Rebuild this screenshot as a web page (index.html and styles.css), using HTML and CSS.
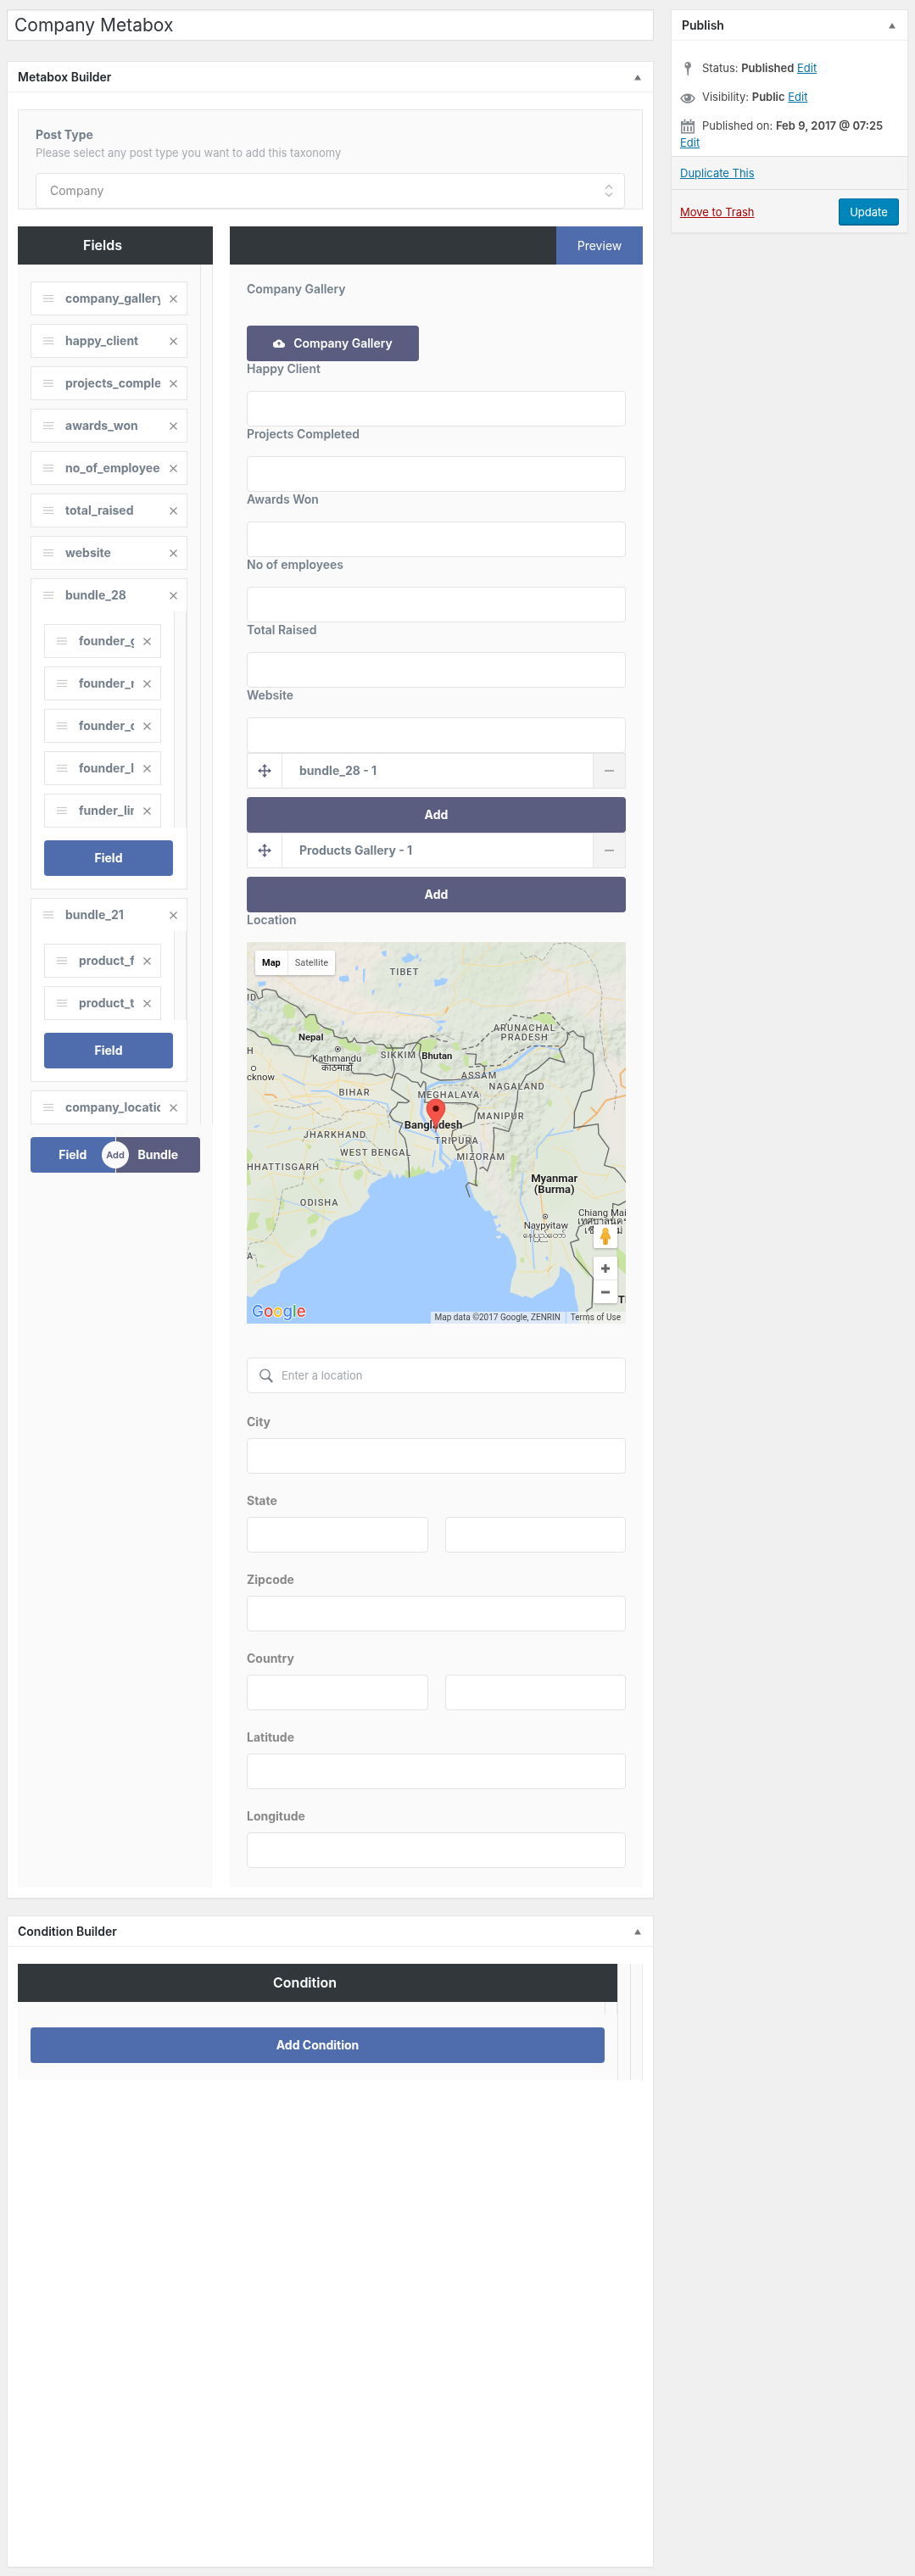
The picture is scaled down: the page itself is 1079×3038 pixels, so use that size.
FILE: index.html
```html
<!DOCTYPE html>
<html lang="en">
<head>
<meta charset="utf-8">
<meta name="viewport" content="width=device-width, initial-scale=1">
<title>Company Metabox</title>
<link rel="stylesheet" href="styles.css">
</head>
<body>
<svg class="sprite" aria-hidden="true">
  <symbol id="i-grip" viewBox="0 0 12 8"><path d="M0 .5h12M0 7.5h12" stroke="#c6c6c6"/><path d="M0 4h12" stroke="#dcdcdc" stroke-width="2"/></symbol>
  <symbol id="i-close" viewBox="0 0 9 9"><path d="M.5.5l8 8M8.5.5l-8 8" stroke="currentColor" stroke-width="1.2"/></symbol>
  <symbol id="i-up" viewBox="0 0 8 7"><path d="M4 0l4 6.500H0z" fill="currentColor"/></symbol>
  <symbol id="i-move" viewBox="0 0 16 16"><path d="M8 2v12M2 8h12" stroke="currentColor" stroke-width="1.500"/><path d="M8 0l3 3.500H5zM8 16l3-3.500H5zM0 8l3.500-3v6zM16 8l-3.500-3v6z" fill="currentColor"/></symbol>
</svg>
<form class="page">
  <main class="main">
    <input class="title" type="text" aria-label="Title" value="Company Metabox">

    <section class="box">
      <header class="box-head"><h2>Metabox Builder</h2><button type="button" class="toggle" aria-label="Toggle Metabox Builder"><svg width="8" height="7"><use href="#i-up"/></svg></button></header>
      <div class="box-body">
        <div class="post-type">
          <label for="post-type">Post Type</label>
          <p>Please select any post type you want to add this taxonomy</p>
          <div class="select">
            <select id="post-type"><option>Company</option></select>
            <svg width="10" height="16" viewBox="0 0 10 16" fill="none" stroke="#bbb" stroke-width="1.500"><path d="M1 5.500l4-4 4 4M1 10.500l4 4 4-4"/></svg>
          </div>
        </div>

        <div class="builder">
          <section class="column">
            <h3 class="bar">Fields</h3>
            <div class="gutter">
              <ul class="fields">
                <li class="item"><div class="row"><svg class="grip" width="12" height="8"><use href="#i-grip"/></svg><span>company_gallery</span><button type="button" aria-label="Remove"><svg width="9" height="9"><use href="#i-close"/></svg></button></div></li>
                <li class="item"><div class="row"><svg class="grip" width="12" height="8"><use href="#i-grip"/></svg><span>happy_client</span><button type="button" aria-label="Remove"><svg width="9" height="9"><use href="#i-close"/></svg></button></div></li>
                <li class="item"><div class="row"><svg class="grip" width="12" height="8"><use href="#i-grip"/></svg><span>projects_completed</span><button type="button" aria-label="Remove"><svg width="9" height="9"><use href="#i-close"/></svg></button></div></li>
                <li class="item"><div class="row"><svg class="grip" width="12" height="8"><use href="#i-grip"/></svg><span>awards_won</span><button type="button" aria-label="Remove"><svg width="9" height="9"><use href="#i-close"/></svg></button></div></li>
                <li class="item"><div class="row"><svg class="grip" width="12" height="8"><use href="#i-grip"/></svg><span>no_of_employees</span><button type="button" aria-label="Remove"><svg width="9" height="9"><use href="#i-close"/></svg></button></div></li>
                <li class="item"><div class="row"><svg class="grip" width="12" height="8"><use href="#i-grip"/></svg><span>total_raised</span><button type="button" aria-label="Remove"><svg width="9" height="9"><use href="#i-close"/></svg></button></div></li>
                <li class="item"><div class="row"><svg class="grip" width="12" height="8"><use href="#i-grip"/></svg><span>website</span><button type="button" aria-label="Remove"><svg width="9" height="9"><use href="#i-close"/></svg></button></div></li>
                <li class="item">
                  <div class="row"><svg class="grip" width="12" height="8"><use href="#i-grip"/></svg><span>bundle_28</span><button type="button" aria-label="Remove"><svg width="9" height="9"><use href="#i-close"/></svg></button></div>
                  <div class="gutter">
                    <ul class="fields nested">
                      <li class="item"><div class="row"><svg class="grip" width="12" height="8"><use href="#i-grip"/></svg><span>founder_gallery</span><button type="button" aria-label="Remove"><svg width="9" height="9"><use href="#i-close"/></svg></button></div></li>
                      <li class="item"><div class="row"><svg class="grip" width="12" height="8"><use href="#i-grip"/></svg><span>founder_name</span><button type="button" aria-label="Remove"><svg width="9" height="9"><use href="#i-close"/></svg></button></div></li>
                      <li class="item"><div class="row"><svg class="grip" width="12" height="8"><use href="#i-grip"/></svg><span>founder_designation</span><button type="button" aria-label="Remove"><svg width="9" height="9"><use href="#i-close"/></svg></button></div></li>
                      <li class="item"><div class="row"><svg class="grip" width="12" height="8"><use href="#i-grip"/></svg><span>founder_link</span><button type="button" aria-label="Remove"><svg width="9" height="9"><use href="#i-close"/></svg></button></div></li>
                      <li class="item"><div class="row"><svg class="grip" width="12" height="8"><use href="#i-grip"/></svg><span>funder_linkedin</span><button type="button" aria-label="Remove"><svg width="9" height="9"><use href="#i-close"/></svg></button></div></li>
                    </ul>
                  </div>
                  <div class="item-foot"><button type="button" class="btn blue">Field</button></div>
                </li>
                <li class="item">
                  <div class="row"><svg class="grip" width="12" height="8"><use href="#i-grip"/></svg><span>bundle_21</span><button type="button" aria-label="Remove"><svg width="9" height="9"><use href="#i-close"/></svg></button></div>
                  <div class="gutter">
                    <ul class="fields nested">
                      <li class="item"><div class="row"><svg class="grip" width="12" height="8"><use href="#i-grip"/></svg><span>product_feature</span><button type="button" aria-label="Remove"><svg width="9" height="9"><use href="#i-close"/></svg></button></div></li>
                      <li class="item"><div class="row"><svg class="grip" width="12" height="8"><use href="#i-grip"/></svg><span>product_title</span><button type="button" aria-label="Remove"><svg width="9" height="9"><use href="#i-close"/></svg></button></div></li>
                    </ul>
                  </div>
                  <div class="item-foot"><button type="button" class="btn blue">Field</button></div>
                </li>
                <li class="item"><div class="row"><svg class="grip" width="12" height="8"><use href="#i-grip"/></svg><span>company_location</span><button type="button" aria-label="Remove"><svg width="9" height="9"><use href="#i-close"/></svg></button></div></li>
              </ul>
            </div>
            <div class="add-pair">
              <button type="button" class="btn blue">Field</button>
              <button type="button" class="btn violet">Bundle</button>
              <span class="add-badge">Add</span>
            </div>
          </section>

          <section class="column">
            <div class="bar bar-preview"><button type="button">Preview</button></div>
            <div class="preview">
              <div class="field gallery">
                <span class="label">Company Gallery</span>
                <button type="button" class="btn violet upload"><svg width="14" height="10" viewBox="0 0 14 10"><path d="M11.300 3.900A4.500 4.500 0 0 0 3 2.800 3.600 3.600 0 0 0 3.600 10h7.300a3 3 0 0 0 .4-6.100z" fill="#fff"/><path d="M7 2.800l2.400 2.600H7.700v2H6.300v-2H4.600z" fill="#5a5d80"/></svg>Company Gallery</button>
              </div>
              <div class="field"><label for="f1">Happy Client</label><input id="f1" type="text"></div>
              <div class="field"><label for="f2">Projects Completed</label><input id="f2" type="text"></div>
              <div class="field"><label for="f3">Awards Won</label><input id="f3" type="text"></div>
              <div class="field"><label for="f4">No of employees</label><input id="f4" type="text"></div>
              <div class="field"><label for="f5">Total Raised</label><input id="f5" type="text"></div>
              <div class="field"><label for="f6">Website</label><input id="f6" type="text"></div>
              <div class="bundle"><span class="move"><svg width="16" height="16"><use href="#i-move"/></svg></span><strong>bundle_28 - 1</strong><button type="button" aria-label="Collapse"><i></i></button></div>
              <button type="button" class="btn violet wide">Add</button>
              <div class="bundle"><span class="move"><svg width="16" height="16"><use href="#i-move"/></svg></span><strong>Products Gallery - 1</strong><button type="button" aria-label="Collapse"><i></i></button></div>
              <button type="button" class="btn violet wide">Add</button>
              <div class="field">
                <span class="label">Location</span>
                <div class="map">
                  <svg class="map-art" viewBox="33 33 1341 1350" preserveAspectRatio="xMidYMid slice" role="img" aria-label="Map of Bangladesh">
                    <defs>
                      <filter id="relief" x="0" y="0" width="100%" height="100%">
                        <feTurbulence type="fractalNoise" baseFrequency=".03" numOctaves="4" seed="7"/>
                        <feDiffuseLighting lighting-color="#fff" surfaceScale="14" diffuseConstant="1.100" result="l"><feDistantLight azimuth="225" elevation="52"/></feDiffuseLighting>
                        <feComposite in="l" in2="SourceGraphic" operator="in"/>
                      </filter>
                      <filter id="soft" x="-20%" y="-20%" width="140%" height="140%"><feGaussianBlur stdDeviation="14"/></filter>
                    </defs>
                    <path fill="#e3e9dc" d="M33 33h1341v1350H33z"/>
                    <g filter="url(#soft)">
                      <path fill="#efebe3" d="M33 33H480L560 75 470 110 490 170 400 200 520 260 700 280 680 360 560 370 420 350 300 280 180 220 33 190z"/>
                      <path fill="#ebe9e2" d="M1080 80l180 90 114-30v170l-120 20-60-80-110 50-90-110zM1280 400l94 60v370l-60-40-30-130z"/>
                      <path fill="#e9eadb" d="M33 370l200 90 180 50 130 20v110l-150 30-360-60zM620 620l200 10-10 150-180 20z"/>
                      <path fill="#dfe8d7" d="M780 60l230-20 80 70-140 130-160-20zM1050 700l130 20 20 250-110 20zM90 900l230-50 20 120-220 200-80-90z"/>
                      <path fill="#ece8e2" d="M860 640l50 40-20 100 60 160 50 220-50-150-110-200z"/>
                    </g>
                    <g opacity=".2" style="mix-blend-mode:multiply">
                      <path filter="url(#relief)" d="M33 200l140 20 110 70 140 70 170 0 200-10 100 20 150-90 130 10 100 60 110-40 150-110v560l-100-50-20-200-100-60-110 100-80 0-60 200-30 180-60 0-40-150 20-160-160 10-90-150-320 30-120-60-210-90-70-40z"/>
                    </g>
                    <g opacity=".08" style="mix-blend-mode:multiply"><path filter="url(#relief)" d="M33 33h1341v400H33zM850 700h180l-20 400-130-140z"/></g>
                    <g fill="#c9e3a2">
                      <path d="M165 255l25-5 15 22-4 28-22 6-17-22zM236 300l28-14 22 22 6 38-28 12-30-22zM190 335l20-5-4 20-18 2zM300 340l30-6 12 20-28 8zM358 372l30 0 24 20 30 12-10 18-40-6-34-24zM458 402l38-2-4 26-22 8-15-14zM520 400l52 4-6 14-42 4zM640 380l48-6 22 10-28 42-54-10zM760 390l22-2 4 30-20-4zM798 432l20 4v38l-14-4zM716 460l46 20-24 12-22-14zM1035 305l40-22 34 8 22 34-40 2-22-14zM1112 438l34-14 2 18-14 6zM860 460l22-10 4 14-18 8zM80 345l50 22 34 24-34 2-48-36z"/>
                      <path d="M33 760l24 30-20 30 12 70-16 5zM240 745l24 10-10 15zM350 795l18 10-10 30-14-15zM390 770l30 5-18 18zM412 845l26-10 8 18-16 24-18-10zM290 865l20 10-20 14zM150 935l18 10-4 36-12-5zM44 990l36 0-14 32 10 20-44 16zM98 1012l30-6 8 42-30 8-4-20zM248 1010l24-18 20 12-16 22-28 6zM258 1052l22-6v22l-20 10zM72 1172l30 8-20 8z"/>
                      <path d="M585 868l12-30 12 12 10-26 12 18 12-20 6 18 14-8 4 22-40 8-12 8zM968 785l24 6-14 60-8 30zM832 872l22 6v16l-16-4zM1100 595l14 0-4 24-10-6zM1003 1150l12 0-2 18-14-4z"/>
                      <path d="M1195 1110l20 30 30 60-2 20-40-50zM1340 1110l34 30v70l-30-30z"/>
                    </g>
                    <g fill="#a3ccff">
                      <path d="M580 90l18-8 6-12 12 8 16 10-14 12-22 8-12-10zM696 165l20 2 6-8 24 6-12 18-36 8zM360 155l32-4 4 20-20 4-16-6zM444 130l8-5-2 50-6 0zM418 120l10-4-2 16-8 2zM72 175l28-4 0 14-24 6zM305 95l18-2 6 10-16 4zM508 68l20-6-2 22-8 0zM630 80l12-5-2 16-8 2zM596 128l10-6 6 14-10 8zM570 180l10-4-2 14-8 2zM476 205l12-6-6 18-6 4zM370 310l6 2v16l-6-2zM700 315l26-6 14 6-20 6zM705 345l16-16 6 8-14 16zM640 95l12-5-4 14zM60 685l20-6-6 8-14 4zM180 690l10-8-2 16-8 4z"/>
                      <path d="M33 1285L50 1291 62 1280 76 1262 112 1246 134 1240 150 1214 152 1200 166 1186 200 1166 228 1150 250 1122 276 1108 302 1084 322 1040 344 1020 368 1008 402 998 430 984 444 962 468 936 460 912 474 888 500 872 528 862 540 838 548 858 556 872 564 850 574 870 584 856 596 866 612 866 638 858 664 850 674 842 686 852 706 850 722 836 728 846 740 816 752 832 762 806 772 796 782 812 796 806 806 834 816 880 838 938 856 962 878 986 892 982 904 1002 918 1000 928 1024 934 1044 922 1040 914 1052 940 1062 958 1078 972 1108 986 1146 986 1186 970 1228 964 1272 990 1280 1010 1290 1018 1284 1042 1294 1054 1284 1082 1268 1116 1250 1138 1214 1142 1180 1158 1190 1178 1210 1192 1250 1194 1284 1204 1320 1210 1383H33z"/>
                      <path d="M1088 1150l10-6 2 20z"/>
                    </g>
                    <g fill="#e3e9dc"><path d="M915 1074a9 7 0 1 0 16-3zM905 1014l22-6 6 16-16 18zM928 1040l20-6 4 24-20 8zM742 826l8-14 4 20-12 4z"/></g>
                    <g fill="none" stroke="#f6dc9a" stroke-width="3" stroke-linejoin="round">
                      <path d="M33 65l40 50 60 30 100 70 120 50 70 22 90-8 110 16 110-6 40-60-10-50 60-60 70-60-10-26M560 295l140-8 110-52 60 25 110 0 50-20 60 0 140-50 60 30M800 40l-6 70 120 10 150-30 40 40 60 10 10 90M1170 120l70-15 40-40M1230 300l60-70 80 10M1290 270l20 120-10 60"/>
                      <path d="M33 400l60 40 50 60 60 30 90 10 70-20 110 20 90-30M33 510l120 10 40 60 90-10 80-50 120 40M50 540l60 60 120-20 100 0 60 50 150 20M33 650l80-20 90 30 130-40M120 440l-30 150 60 60-30 60M250 440l-20 100 30 60 10 80M360 500l-10 90 40 70M450 510l-20 80 60 60 50 60M33 700l90 10 100-20 120 20 100-40M100 760l110-30 60 10 40-50 90 20 130-40M80 870l40-20 130 20 60-30 150-20 80 30M60 800l60 60 20 90-30 100 60 90 40 10M250 740l-20 110 80 90-10 100M340 700l40 100-20 80 40 90M430 720l30 110-10 70M500 650l-20 90 30 90M560 690l0 120M540 640l40 50M130 1000l100-20 120 10M33 940l90 10M33 1080l100 20 60 50M60 1240l80-50 60-30"/>
                      <path d="M600 540l20 70-10 80M690 610l80 40-50 60M720 610l10 70 60 60 20 90M620 750l70 20M780 510l100-20 80-30 110-50 80-10M830 540l60 40 70-10M840 620l60 0 50-40M870 640l0 80 50 60"/>
                      <path d="M1020 840l40 40 20 80 10 60 20 80-10 120M1060 890l-20-80 30-60 60-40 60-80-30-50M1120 760l60 20 40 70 90 10M1090 1040l60 60 40 100M1030 860l-40 90 30 110 0 80 40 60M990 1200l90 0 50-30M1200 900l60 40 110-30M1220 1160l60 60M1300 880l30-60 44 10M1150 560l-60-40-80 30M1210 870l70 80"/>
                    </g>
                    <g fill="none" stroke="#f2b775" stroke-width="6" stroke-linejoin="round"><path d="M1374 575l-70 18-36 50-66 56M1250 618l24 24M1374 480l-20 20 4 40 16 10M735 285l10-22M96 572l30 2 14 12"/><path stroke-width="3" d="M1070 900l8 80 12 80M1096 1200l16-20"/></g>
                    <g fill="none" stroke="#a3ccff" stroke-linejoin="round">
                      <path stroke-width="10" d="M1060 397l-44 32-54 48-56 14M770 530l-60 0-34 16-20 34-6 60 20 40 34 30 16 40-2 50 30 30"/>
                      <path stroke-width="5" d="M906 491l-60 16-76 23M1060 397l90 20M260 560l60 0 50 26 110 8 50 12 14 50 50 40 110 36M716 740l10 40 40 36M240 540l-80-40M700 770l-10 60M1120 690l-60 70 0 40M1010 850l-10 100 40 100 10 140M1090 720l100-20"/>
                      <path stroke-width="3" d="M33 240l60 40M300 600l-60 10-60-20M470 740l-60-10-50 30M500 860l-60-40-120-20M330 1020l-90-50-100-30M860 740l10 80M560 280l120 20 40 30"/>
                    </g>
                    <g fill="none" stroke="#a5a5a0" stroke-width="3" stroke-dasharray="14 6" stroke-linejoin="round">
                      <path d="M130 610l70 10 50-10 50 40 60 10 20-25 70-10 40-25 40 30 8 60M230 740l20-40 60-20 60-20M300 800l-60 30-10 60-70 20-15 90-20 60-30 30-50 10-20 60M300 800l20 30 60 10 60-30 30 40 40 10M440 700l20 30 80 70M670 560l60-20 90 0 40 30 0 40-100-4M880 610l50-50 60-10M860 680l50-8 50 22M830 720l-30-4-30 10M33 1140l30 0 10 50M1000 70l20 20 30-10 30 20 40-60 50-5 60 30 40 60 20 90-8 110 20 140 40 80-10 90M680 370l50-10 40 20M1070 370l80-20"/>
                    </g>
                    <g fill="none" stroke="#666" stroke-width="4" stroke-linejoin="round">
                      <path d="M33 198l30 12 12 24 14-6-2-24 14-5 34 7 10 20 24 14 22 12 22 10 18 22 12 16 10-10 22 0 8 28 24 18 32 10 4 20 28 8 14-4 8 18 14-4 6-12 10 16 34 2 18-8 12 12 30 2 12 12 60 0 6-12 40-8 14 8-6 36 10 32-4 30 30 14 38 14 56-2 98-8 4-36-16-12-18 2 4-36-36-2"/>
                      <path d="M33 340l26 10 18 18 30 6 16 22 56 6 24 32 54 6 8-8 24 26 36 8 60 2 26 30 60 2 20 6 28-6 28 14 10-32-8-36 0-36-8-14M640 384l-20 30-4 12M640 384l18-14"/>
                      <path d="M560 500l10-2 30 14 16 14 22 4 10 16 10-20 8 6 0 40-4 28 78 2 72 0 26 6 14 12-10 18-4 32-26 10-50 20-6 30 20 40 20-10 20-14 10-20 0 20 6 40 14 50-4 50 6 10-30-12-10 12 14 40M560 500l-6 20-10 34 30 20 34 22-10 6-30-2-6 14-16 14-8 16 14 20 32 10-12 30 20 24 8 36 6 50 2 52"/>
                      <path d="M856 835l12-6 16 14 20-60 4-60-2-34 54 14 20-64 10-50 2-30 30-54 40-24 42-38 54 16-20-48 20-16 10-20 0-18 20-10 16 18 22 4 0 40 32 20 4 70-10 56-34 10-26 70 0 40-2 16 20-4 66-10 2 36 36 50-16 60 36 10 18 18 24 34"/>
                      <path d="M1374 950l-26 14-20-6 0 60-60-4-60 26-10 30 10 16-30 10 14 50 66 76-4 104-18 10 6 50"/>
                    </g>
                    <path fill="none" stroke="#666" stroke-width="4" stroke-dasharray="16 9" d="M658 372l28-8 34 18 30 4M795 412l50-10 50-50 50-20 30-40 60 10 40-18 30 0 40 50 40 36M818 475l110-6 50-40 60-28 100 0"/>
                    <g class="region" text-anchor="middle">
                      <text x="591" y="149">TIBET</text><text x="1016" y="347">ARUNACHAL</text><text x="1016" y="381">PRADESH</text><text x="570" y="444">SIKKIM</text><text x="855" y="516">ASSAM</text><text x="989" y="555">NAGALAND</text><text x="748" y="585">MEGHALAYA</text><text x="414" y="576">BIHAR</text><text x="932" y="660">MANIPUR</text><text x="345" y="726">JHARKHAND</text><text x="776" y="747">TRIPURA</text><text x="490" y="789">WEST BENGAL</text><text x="862" y="804">MIZORAM</text><text x="290" y="966">ODISHA</text>
                    </g>
                    <g class="region"><text x="33" y="839">HHATTISGARH</text><text x="33" y="240">ID</text><text x="33" y="429">H</text><text x="33" y="1154">A</text></g>
                    <g class="country" text-anchor="middle"><text x="260" y="381">Nepal</text><text x="706" y="447">Bhutan</text><text class="big" x="693" y="693">Bangladesh</text><text class="big" x="1121" y="881">Myanmar</text><text class="big" x="1121" y="921">(Burma)</text></g>
                    <text class="country big" x="1346" y="1311">TI</text>
                    <g class="city"><text x="264" y="456">Kathmandu</text><text x="297" y="489">काठमाडौँ</text><text x="33" y="522">cknow</text><text x="1013" y="1046">Naypyitaw</text><text x="1010" y="1080">နေပြည်တော်</text><text x="1206" y="1001">Chiang Mai</text><text x="1204" y="1032">เทศบาลนคร</text><text x="1228" y="1066">เชียงใหม่</text></g>
                    <g fill="#fff" stroke="#444" stroke-width="3"><circle cx="355" cy="412" r="9"/><circle cx="57" cy="480" r="8"/><circle cx="1089" cy="1004" r="8"/></g>
                    <g fill="#222"><circle cx="355" cy="412" r="4"/><circle cx="1089" cy="1004" r="3"/></g>
                    <path fill="#f5534a" stroke="#b8392e" stroke-width="2" d="M702 706c-3-46-33-58-33-85a33 33 0 0 1 66 0c0 27-30 39-33 85z"/><circle cx="702" cy="622" r="11" fill="#5d120c"/>
                    <text class="logo" x="51" y="1359"><tspan fill="#4285f4">G</tspan><tspan fill="#ea4335">o</tspan><tspan fill="#fbbc05">o</tspan><tspan fill="#4285f4">g</tspan><tspan fill="#34a853">l</tspan><tspan fill="#ea4335">e</tspan></text>
                  </svg>
                  <div class="map-type"><button type="button" class="on">Map</button><button type="button">Satellite</button></div>
                  <div class="map-tools">
                    <button type="button" class="pegman" aria-label="Street View"><svg width="14" height="20" viewBox="0 0 14 20"><path d="M3.500 6.500h7l2.500 6-1.600.8-1.400-2.300-.8 8.500H4.800L4 11l-1.400 2.300L1 12.500z" fill="#f7b52c" stroke="#d98e1b" stroke-width=".6"/><circle cx="7" cy="3.600" r="3.300" fill="#fbc13a" stroke="#d98e1b" stroke-width=".5"/><path d="M7 12.500v7" stroke="#c27c12"/></svg></button>
                    <div class="zoom"><button type="button" aria-label="Zoom in"><svg width="12" height="12"><path d="M1 6h10M6 1v10" stroke="#666" stroke-width="3"/></svg></button><button type="button" aria-label="Zoom out"><svg width="12" height="12"><path d="M1 6h10" stroke="#666" stroke-width="3"/></svg></button></div>
                  </div>
                  <div class="map-legal"><span>Map data ©2017 Google, ZENRIN</span><a href="#terms">Terms of Use</a></div>
                </div>
              </div>
              <div class="search">
                <svg width="16" height="17" viewBox="0 0 16 17" fill="none" stroke="#6f7a85"><circle cx="6.500" cy="6.800" r="5.700" stroke-width="1.400"/><path d="M10.500 11l4.700 5" stroke-width="2.200"/></svg>
                <input type="text" aria-label="Location" placeholder="Enter a location">
              </div>
              <div class="address">
                <div><label for="a1">City</label><input id="a1" type="text"></div>
                <div><label for="a2">State</label><div class="pair"><input id="a2" type="text"><input type="text" aria-label="State code"></div></div>
                <div><label for="a3">Zipcode</label><input id="a3" type="text"></div>
                <div><label for="a4">Country</label><div class="pair"><input id="a4" type="text"><input type="text" aria-label="Country code"></div></div>
                <div><label for="a5">Latitude</label><input id="a5" type="text"></div>
                <div><label for="a6">Longitude</label><input id="a6" type="text"></div>
              </div>
            </div>
          </section>
        </div>
      </div>
    </section>

    <section class="box grow">
      <header class="box-head"><h2>Condition Builder</h2><button type="button" class="toggle" aria-label="Toggle Condition Builder"><svg width="8" height="7"><use href="#i-up"/></svg></button></header>
      <div class="box-body">
        <div class="gutter condition-outer"><div class="gutter"><div class="condition">
          <h3 class="bar">Condition</h3>
          <div class="gutter slot"><div></div></div>
          <button type="button" class="btn blue">Add Condition</button>
        </div></div></div>
      </div>
    </section>
  </main>

  <aside class="box side">
    <header class="box-head"><h2>Publish</h2><button type="button" class="toggle" aria-label="Toggle Publish"><svg width="8" height="7"><use href="#i-up"/></svg></button></header>
    <div class="status">
      <p><svg width="18" height="18" viewBox="0 0 18 18"><path d="M9 1a4 4 0 0 1 1.400 7.700L9.900 17H8.700L7.900 8.700A4 4 0 0 1 9 1z" fill="#82878c"/><circle cx="8" cy="4" r="1.200" fill="#fff"/></svg>Status: <b>Published</b> <a href="#status">Edit</a></p>
      <p><svg width="18" height="18" viewBox="0 0 18 18"><path d="M1 10c4-6.500 12-6.500 16 0-4 6.500-12 6.500-16 0z" fill="none" stroke="#82878c" stroke-width="1.500"/><circle cx="9" cy="9.500" r="4" fill="#82878c"/><circle cx="7.700" cy="8.300" r="1.300" fill="#fff"/></svg>Visibility: <b>Public</b> <a href="#visibility">Edit</a></p>
      <p><svg width="18" height="18" viewBox="0 0 18 18"><path d="M1 3h16v14.500H1z" fill="#82878c"/><path d="M2.500 7.500h13V16h-13z" fill="#fff"/><path d="M5 9v6M9 9v6M13 9v6" stroke="#82878c" stroke-width="1.800"/><path d="M5.500 0v5M12.500 0v5" stroke="#fff" stroke-width="3.500"/><path d="M5.500.5v4M12.500.5v4" stroke="#82878c" stroke-width="1.700"/></svg>Published on: <b>Feb 9, 2017 @ 07:25</b> <a href="#date">Edit</a></p>
    </div>
    <div class="duplicate"><a href="#duplicate">Duplicate This</a></div>
    <div class="actions"><a class="trash" href="#trash">Move to Trash</a><button type="submit">Update</button></div>
  </aside>
</form>
</body>
</html>
```
FILE: styles.css
```css
*, *::before, *::after { box-sizing: border-box; }
body {
  margin: 0;
  background: #f0f0f0;
  color: #444;
  font: 13px/20px Inter, "Open Sans", sans-serif;
}
h2, h3, p, ul { margin: 0; padding: 0; list-style: none; }
button, input, select { font: inherit; color: inherit; margin: 0; }
button { padding: 0; border: 0; background: none; cursor: pointer; }
svg { display: block; flex: none; }
a { color: #0073aa; }
.sprite { position: absolute; width: 0; height: 0; }

.page {
  display: grid;
  grid-template-columns: minmax(0, 1fr) 280px;
  gap: 20px;
  align-items: start;
  min-height: 100vh;
  padding: 11px 8px 10px;
}
.main { display: flex; flex-direction: column; align-self: stretch; gap: 20px; }
.title {
  width: 100%;
  height: 37px;
  margin-bottom: 4px;
  padding: 0 8px;
  border: 1px solid #ddd;
  background: #fff;
  box-shadow: inset 0 1px 2px rgba(0, 0, 0, .07);
  color: #32373c;
  font-size: 21px;
}

.box { border: 1px solid #e5e5e5; background: #fff; box-shadow: 0 1px 1px rgba(0, 0, 0, .04); }
.grow { flex: 1; }
.box-head {
  display: flex;
  align-items: center;
  justify-content: space-between;
  height: 36px;
  padding: 0 14px 0 12px;
  border-bottom: 1px solid #eee;
}
.box-head h2 { color: #23282d; font-size: 14px; font-weight: 600; }
.toggle { color: #72777c; padding-top: 2px; }
.box-body { display: flex; flex-direction: column; gap: 20px; padding: 20px 12px 12px; }

.post-type { padding: 18px 20px 0; border: 1px solid #e5e5e5; background: #fafafa; }
.post-type label { display: block; color: #737f8b; font-size: 14px; font-weight: 700; line-height: 22px; }
.post-type p { margin-bottom: 14px; color: #a5aab0; }
.select { position: relative; }
.select select {
  width: 100%;
  height: 42px;
  padding: 0 16px;
  border: 1px solid #e3e3e3;
  border-radius: 4px;
  background: #fff;
  appearance: none;
  color: #8b8b8b;
  font-size: 14px;
}
.select svg { position: absolute; top: 13px; right: 14px; pointer-events: none; }

.builder { display: grid; grid-template-columns: 230px minmax(0, 1fr); gap: 20px; }
.column { background: #fafafa; }
.bar {
  height: 45px;
  padding-right: 30px;
  background: #32373b;
  color: #fff;
  font-size: 16px;
  font-weight: 600;
  line-height: 45px;
  text-align: center;
}
.bar-preview { display: flex; justify-content: flex-end; padding: 0; }
.bar-preview button { width: 102px; background: #4f6dad; color: #fff; font-size: 14px; font-weight: 400; }

.gutter { padding-right: 13px; border-right: 1px solid #e8e8e8; background: #fafafa; }
.fields {
  display: flex;
  flex-direction: column;
  gap: 10px;
  padding: 20px 15px 0;
  border-right: 1px solid #e5e5e5;
}
.nested { padding-top: 15px; background: #fff; }
.item { border: 1px solid #e5e5e5; background: #fff; }
.row { display: flex; align-items: center; height: 38px; padding: 0 11px 0 14px; }
.row span {
  flex: 1;
  min-width: 0;
  margin: 0 11px 0 14px;
  overflow: hidden;
  white-space: nowrap;
  color: #737f8b;
  font-size: 14px;
  font-weight: 700;
}
.row button { color: #888; }
.item-foot { padding: 15px 16px 15px 15px; }

.btn {
  width: 100%;
  height: 42px;
  border-radius: 4px;
  color: #fff;
  font-size: 14px;
  font-weight: 700;
}
.blue { background: #4f6dad; }
.violet { background: #5a5d80; }
.add-pair { position: relative; display: flex; gap: 1px; margin: 15px; }
.add-pair .blue { border-radius: 4px 0 0 4px; }
.add-pair .violet { border-radius: 0 4px 4px 0; }
.add-badge {
  position: absolute;
  top: 5px;
  left: calc(50% - 16px);
  width: 32px;
  height: 32px;
  border-radius: 50%;
  background: #fafafa;
  color: #5a5d80;
  font-size: 11px;
  font-weight: 600;
  line-height: 32px;
  text-align: center;
}

.preview { padding: 20px 20px 23px; }
.field label, .label {
  display: block;
  margin-bottom: 17px;
  color: #737f8b;
  font-size: 14px;
  font-weight: 600;
  line-height: 18px;
}
.gallery .label { margin-bottom: 34px; }
.preview input {
  display: block;
  width: 100%;
  height: 42px;
  padding: 0 16px;
  border: 1px solid #e3e3e3;
  border-radius: 4px;
  background: #fff;
}
.upload { display: flex; align-items: center; justify-content: center; gap: 10px; width: 203px; font-weight: 600; }
.bundle { display: flex; height: 42px; margin-bottom: 10px; border: 1px solid #e3e3e3; background: #fff; color: #737f8b; font-size: 14px; }
.bundle .move { display: grid; place-items: center; width: 41px; border-right: 1px solid #e3e3e3; color: #5a5d80; }
.bundle strong { flex: 1; padding-left: 20px; font-weight: 700; line-height: 40px; }
.bundle button { display: grid; place-items: center; width: 38px; border-left: 1px solid #e3e3e3; background: #f3f3f3; }
.bundle i { width: 11px; height: 2px; background: #aaa; }
.wide { display: block; }

.map { position: relative; height: 450px; margin-bottom: 40px; overflow: hidden; font-family: Roboto, "Noto Sans", sans-serif; }
.map-art { width: 100%; height: 100%; }
.map-art text { paint-order: stroke; stroke: rgba(255, 255, 255, .6); stroke-width: 5px; stroke-linejoin: round; }
.region { fill: #555; font-size: 33px; font-weight: 500; letter-spacing: 3px; }
.country { fill: #222; font-size: 34px; font-weight: 700; }
.big { font-size: 39px; font-weight: 700; }
.city { fill: #2b2b2b; font-size: 34px; }
.map-art .logo { font-family: Inter, sans-serif; font-size: 56px; font-weight: 500; stroke: #fff; }
.map-type { position: absolute; top: 10px; left: 10px; display: flex; height: 29px; border-radius: 2px; background: #fff; box-shadow: 0 1px 3px rgba(0, 0, 0, .3); font-size: 11px; }
.map-type button { padding: 0 8px; color: #565656; }
.map-type .on { border-right: 1px solid #e6e6e6; color: #000; font-weight: 700; }
.map-tools { position: absolute; right: 10px; bottom: 24px; display: grid; gap: 10px; }
.pegman, .zoom { width: 28px; border-radius: 2px; background: #fff; box-shadow: 0 1px 3px rgba(0, 0, 0, .3); }
.pegman { display: grid; place-items: center; height: 28px; }
.zoom button { display: grid; place-items: center; width: 100%; height: 27px; }
.zoom button + button { border-top: 1px solid #e6e6e6; height: 28px; }
.map-legal { position: absolute; right: 0; bottom: 0; display: flex; gap: 1px; height: 14px; color: #444; font-size: 10px; line-height: 14px; }
.map-legal > * { padding: 0 6px 0 5px; background: rgba(245, 245, 245, .7); color: #444; text-decoration: none; white-space: nowrap; }

.search { position: relative; margin-bottom: 23px; }
.search svg { position: absolute; top: 13px; left: 15px; }
.preview .search input { padding-left: 40px; }
.search input::placeholder { color: #a0a5aa; opacity: 1; }
.address { display: grid; gap: 21px; }
.address label { display: block; margin-bottom: 8px; color: #888; font-size: 14px; font-weight: 700; line-height: 22px; }
.pair { display: grid; grid-template-columns: 1fr 1fr; gap: 20px; }

.condition { border-right: 1px solid #e5e5e5; padding-bottom: 20px; }
.condition-outer > .gutter { padding-right: 14px; border-color: #e0e0e0; }
.condition .btn { display: block; width: calc(100% - 30px); margin: 15px 15px 0; }
.slot div { height: 15px; border-right: 1px solid #e5e5e5; }

.status { display: grid; gap: 14px; padding: 22px 10px 6px; }
.status svg { display: inline-block; margin: -2px 8px -2px 0; vertical-align: middle; }
.status b { font-weight: 600; }
.duplicate { padding: 9px 10px; border-top: 1px solid #ddd; background: #f5f5f5; }
.actions { display: flex; align-items: center; justify-content: space-between; padding: 10px 10px 9px; border-top: 1px solid #ddd; background: #f5f5f5; }
.trash { color: #a00; }
.actions button {
  width: 71px;
  height: 31px;
  border: 1px solid #006799;
  border-color: #0073aa #006799 #006799;
  border-radius: 3px;
  background: #0085ba;
  box-shadow: 0 1px 0 #006799;
  color: #fff;
}
```
